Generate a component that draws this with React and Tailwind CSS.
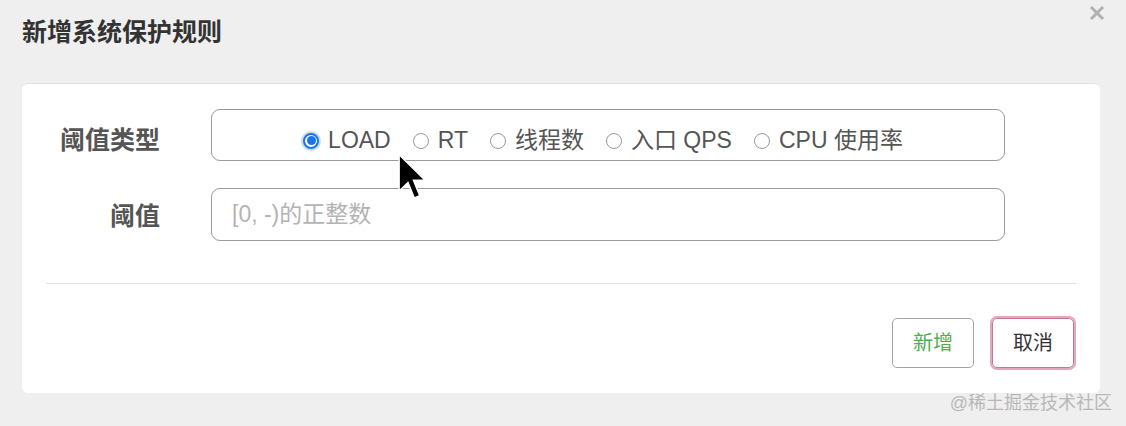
import { useState } from "react";

const FONT = { fontFamily: '"Liberation Sans", "Noto Sans CJK SC", sans-serif' };

const OPTIONS = ["LOAD", "RT", "线程数", "入口 QPS", "CPU 使用率"];

function Radio({ checked }) {
  if (checked) {
    return (
      <span className="w-[16px] h-[16px] rounded-full border-[2px] border-[#1a73e8] bg-white flex items-center justify-center shrink-0 ring-2 ring-[#c8dcf8]">
        <span className="w-[9px] h-[9px] rounded-full bg-[#1a73e8]" />
      </span>
    );
  }
  return <span className="w-[16px] h-[16px] rounded-full border border-[#999] bg-white shrink-0" />;
}

export default function App() {
  const [type, setType] = useState(0);

  return (
    <div className="relative w-[1126px] h-[426px] bg-[#efefef] overflow-hidden" style={FONT}>
      {/* Header */}
      <div className="flex items-start justify-between h-[83px]">
        <h1 className="pl-[22px] pt-[17px] text-[25px] font-bold text-[#333] leading-[30px]">新增系统保护规则</h1>
        <svg className="mt-[5px] mr-[21px] w-[16px] h-[16px] text-[#b0b0b0]" viewBox="0 0 16 16" fill="none" stroke="currentColor" strokeWidth={3}>
          <path d="M2 2l12 12M14 2L2 14" />
        </svg>
      </div>

      {/* Card */}
      <div className="ml-[22px] mr-[26px] h-[310px] bg-white rounded-[6px] border-t border-[#e2e2e2] pt-[25px]">
        <div className="flex items-center">
          <label className="w-[138px] pt-[12px] text-right text-[25px] font-bold text-[#555]">阈值类型</label>
          <div className="ml-[51px] w-[794px] h-[52px] rounded-[9px] border border-[#9a9a9a] flex items-center justify-center pt-[11px] pr-[10px]">
            <div className="flex items-center gap-[22px] text-[23px] text-[#555] leading-none">
              {OPTIONS.map((o, i) => (
                <button key={o} className="flex items-center gap-[9px]" onClick={() => setType(i)}>
                  <Radio checked={type === i} />
                  <span>{o}</span>
                </button>
              ))}
            </div>
          </div>
        </div>

        <div className="flex items-center mt-[27px]">
          <label className="w-[138px] pt-[5px] text-right text-[25px] font-bold text-[#555]">阈值</label>
          <input
            className="ml-[51px] w-[794px] h-[53px] rounded-[9px] border border-[#9a9a9a] px-[20px] text-[23px] text-[#555] placeholder:text-[#b3b3b3] outline-none"
            placeholder="[0, -)的正整数"
            style={FONT}
          />
        </div>

        <div className="mx-[24px] mt-[42px] h-px bg-[#e0e0e0]" />

        <div className="flex justify-end items-center gap-[18px] pr-[26px] mt-[34px]">
          <button className="w-[82px] h-[50px] rounded-[5px] border border-[#9aa8a0] text-[20px] text-[#4cae4c]">新增</button>
          <button className="w-[82px] h-[50px] rounded-[5px] border border-[#c27a93] ring-2 ring-[#e2a9bb] text-[20px] text-[#333]">取消</button>
        </div>
      </div>

      {/* Watermark */}
      <div className="absolute right-[14px] bottom-[14px] text-[18px] text-[#b8b8b8] leading-none">@稀土掘金技术社区</div>

      {/* Mouse cursor */}
      <svg className="absolute left-[398px] top-[153px] w-[28px] h-[48px]" viewBox="0 0 12 20">
        <path d="M0.5 0.5 L0.5 16 L4.3 12.3 L7 19 L9.3 18 L6.6 11.4 L11.6 11.4 Z" fill="#000" stroke="#fff" strokeWidth="0.6" />
      </svg>
    </div>
  );
}
